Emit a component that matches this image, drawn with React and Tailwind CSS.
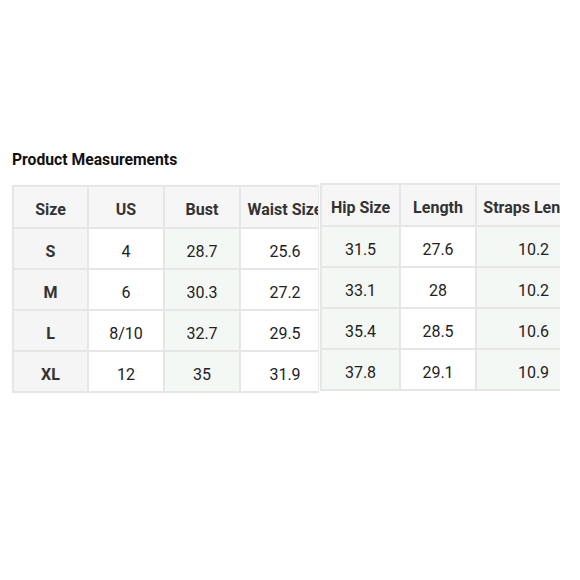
import React from 'react';

const leftCols = [
  { key: 'size', label: 'Size', w: 75, bg: 'bg-[#f5f5f5]' },
  { key: 'us', label: 'US', w: 76, bg: 'bg-white' },
  { key: 'bust', label: 'Bust', w: 76, bg: 'bg-[#f4f8f4]' },
  { key: 'waist', label: 'Waist Size', w: 90, bg: 'bg-white' },
];

const rightCols = [
  { key: 'hip', label: 'Hip Size', w: 79, bg: 'bg-[#f4f8f4]' },
  { key: 'length', label: 'Length', w: 76, bg: 'bg-white' },
  { key: 'straps', label: 'Straps Length', w: 115, bg: 'bg-[#f4f8f4]' },
];

const rows = [
  { size: 'S', us: '4', bust: '28.7', waist: '25.6', hip: '31.5', length: '27.6', straps: '10.2' },
  { size: 'M', us: '6', bust: '30.3', waist: '27.2', hip: '33.1', length: '28', straps: '10.2' },
  { size: 'L', us: '8/10', bust: '32.7', waist: '29.5', hip: '35.4', length: '28.5', straps: '10.6' },
  { size: 'XL', us: '12', bust: '35', waist: '31.9', hip: '37.8', length: '29.1', straps: '10.9' },
];

const SizeTable = ({ cols }) => {
  const total = cols.reduce((sum, c) => sum + c.w, 0);

  return (
    <table className="border-collapse table-fixed" style={{ width: total }}>
      <colgroup>
        {cols.map((c) => (
          <col key={c.key} style={{ width: c.w }} />
        ))}
      </colgroup>
      <thead>
        <tr>
          {cols.map((c) => (
            <th
              key={c.key}
              className="h-[42px] pt-[5px] border-2 border-[#e6e6e6] bg-[#f6f6f6] text-center text-[16px] font-bold text-[#333] whitespace-nowrap overflow-hidden"
            >
              {c.label}
            </th>
          ))}
        </tr>
      </thead>
      <tbody>
        {rows.map((r) => (
          <tr key={r.size}>
            {cols.map((c) => (
              <td
                key={c.key}
                className={`h-[41px] pt-[6px] border-2 border-[#e6e6e6] text-center text-[16px] ${c.bg} ${
                  c.key === 'size' ? 'font-bold text-[#333]' : 'text-[#222]'
                }`}
              >
                {r[c.key]}
              </td>
            ))}
          </tr>
        ))}
      </tbody>
    </table>
  );
};

const App = () => {
  return (
    <div
      className="w-[580px] h-[580px] bg-white overflow-hidden"
      style={{ fontFamily: 'Roboto, "Liberation Sans", sans-serif' }}
    >
      <div className="pt-[150px] pl-[12px]">
        <h2 className="text-[15.7px] leading-[20px] font-bold text-[#111]">Product Measurements</h2>

        <div className="flex items-start mt-[13px]">
          {/* left half of the chart */}
          <div className="w-[306px] shrink-0 overflow-hidden mt-[2px] shadow-[1px_0_1px_rgba(0,0,0,0.08)]">
            <SizeTable cols={leftCols} />
          </div>

          {/* right half, slightly offset like the stitched image */}
          <div className="w-[240px] shrink-0 ml-[2px] overflow-hidden">
            <SizeTable cols={rightCols} />
          </div>
        </div>
      </div>
    </div>
  );
};

export default App;
